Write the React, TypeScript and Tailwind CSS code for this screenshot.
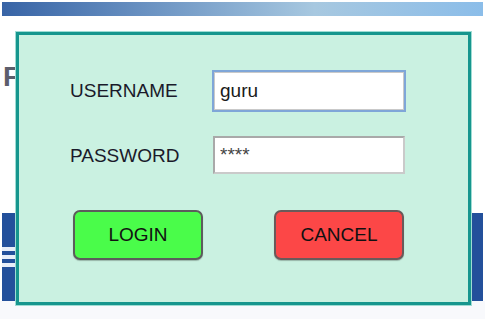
const LoginDialog = () => {
  return (
    <div className="absolute left-[16px] top-[32px] h-[273px] w-[455px] border-[3px] border-[#16968e] bg-[#caf1e1] shadow-[0_0_0_1px_#9fdcd4]">
      <div className="flex flex-col pl-[51px] pt-[35px]">
        <div className="flex items-center">
          <label className="w-[142px] text-[19px] text-[#1a1a2a]">USERNAME</label>
          <input
            readOnly
            defaultValue="guru"
            className="h-[42px] w-[194px] border-2 border-[#7fa6d8] bg-white px-[6px] text-[19px] text-[#1a1a1a] shadow-[inset_0_0_0_1px_#c9c9c9] outline-none"
          />
        </div>
        <div className="mt-[24px] flex items-center">
          <label className="w-[143px] pt-[3px] text-[19px] text-[#1a1a2a]">PASSWORD</label>
          <input
            readOnly
            defaultValue="****"
            className="h-[38px] w-[192px] border-2 border-[#a9a9a9] border-r-[#cacaca] border-b-[#cacaca] bg-white px-[5px] text-[19px] text-[#444] outline-none"
          />
        </div>
        <div className="mt-[36px] flex pl-[3px]">
          <button className="h-[50px] w-[130px] rounded-[7px] border-2 border-[#5c5c5c] bg-[#4afc4a] text-[19px] text-[#111] shadow-[0_1px_1px_rgba(0,0,0,0.25)]">
            LOGIN
          </button>
          <button className="ml-[71px] h-[50px] w-[130px] rounded-[7px] border-2 border-[#6a5a5a] bg-[#fc4747] text-[19px] text-[#111] shadow-[0_1px_1px_rgba(0,0,0,0.25)]">
            CANCEL
          </button>
        </div>
      </div>
    </div>
  )
}

export default function App() {
  return (
    <div className="relative h-[319px] w-[485px] overflow-hidden bg-white font-['Liberation_Sans',Arial,sans-serif]">
      <div className="mx-[2px] mt-[2px] h-[14px] bg-gradient-to-r from-[#3864a6] via-[#a7c8e0] via-65% to-[#8bbde9]" />
      <div className="h-[197px] pl-[3px] pt-[47px]">
        <h1 className="text-[28px] leading-[28px] font-bold text-[#5c5e6c]">F</h1>
      </div>
      <nav className="mx-[2px] flex h-[88px] items-center bg-[#23509b]">
        <div className="flex w-[14px] flex-col gap-[4px]">
          <span className="h-[4px] bg-[#e8eef8]" />
          <span className="h-[4px] bg-[#e8eef8]" />
          <span className="h-[4px] bg-[#e8eef8]" />
        </div>
      </nav>
      <div className="h-full bg-[#f8f9fc]" />
      <LoginDialog />
    </div>
  )
}
